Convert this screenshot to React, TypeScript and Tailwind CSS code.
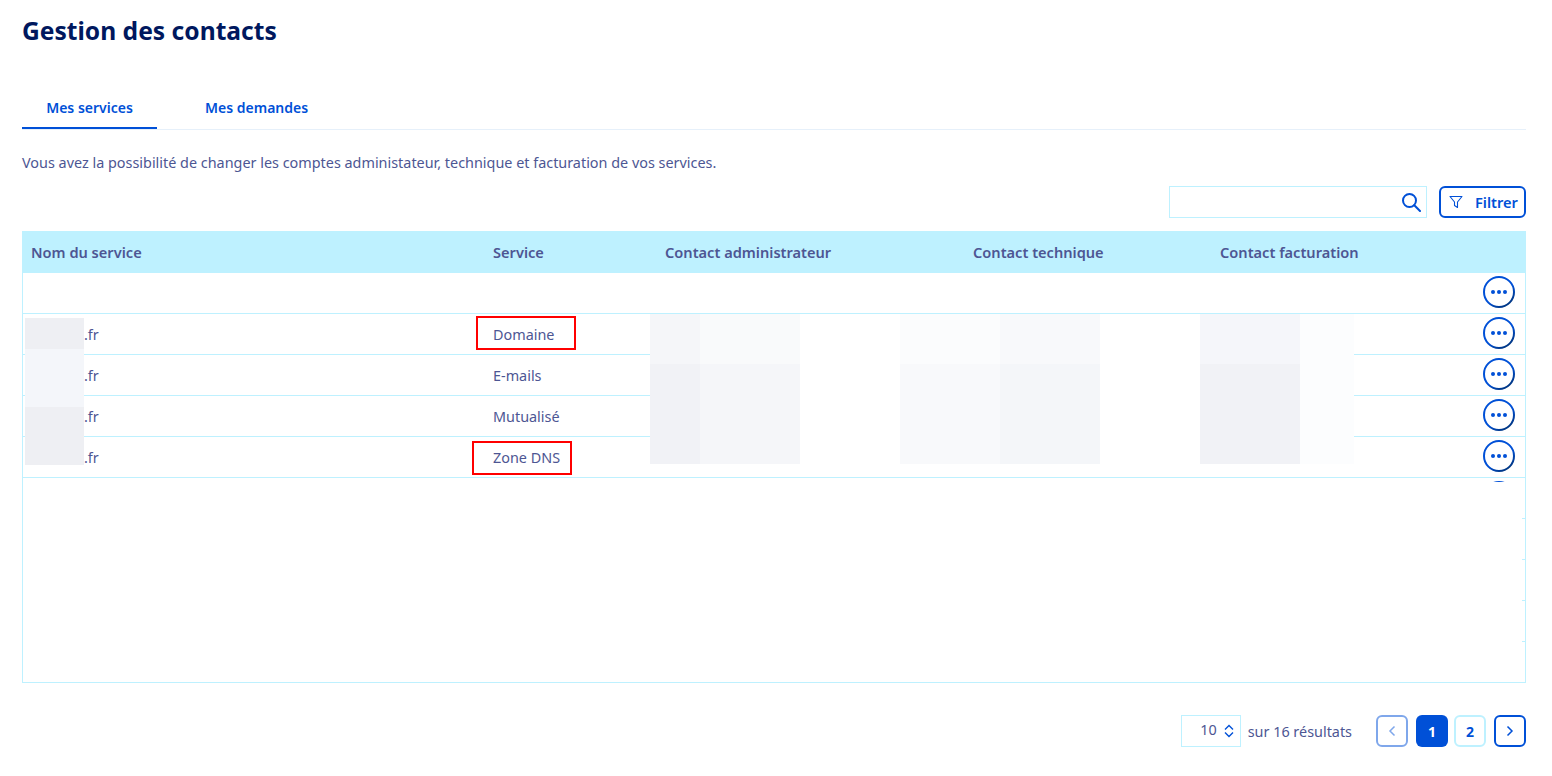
import React from "react";

const font = { fontFamily: '"Noto Sans", sans-serif' };

function MoreButton() {
  return (
    <svg width="32" height="32" viewBox="0 0 32 32" className="block">
      <defs>
        <linearGradient id="ring" x1="0.2" y1="0.1" x2="0.8" y2="0.95">
          <stop offset="0" stopColor="#0050d7" />
          <stop offset="0.55" stopColor="#0050d7" />
          <stop offset="1" stopColor="#00357f" />
        </linearGradient>
      </defs>
      <circle cx="16" cy="16" r="15" fill="#fff" stroke="url(#ring)" strokeWidth="2" />
      <circle cx="10" cy="16" r="2" fill="#0050d7" />
      <circle cx="16" cy="16" r="2" fill="#0050d7" />
      <circle cx="22" cy="16" r="2" fill="#0050d7" />
    </svg>
  );
}

const rows = [".fr", ".fr", ".fr", ".fr"];
const services = ["Domaine", "E-mails", "Mutualisé", "Zone DNS"];

function Row({ name, service }: { name: string; service: string }) {
  return (
    <div className="grid h-[41px] grid-cols-[462px_172px_308px_247px_1fr] items-center border-b border-[#bef1ff]">
      <div className="mt-[2px] pl-[61px]">{name}</div>
      <div className="mt-[2px] pl-[8px]">{service}</div>
      <div />
      <div />
      <div className="mb-[2px] flex justify-end pr-[10px]">
        <MoreButton />
      </div>
    </div>
  );
}

function Blur({ cls }: { cls: string }) {
  return <div className={cls} />;
}

export default function App() {
  return (
    <div style={font} className="relative h-[776px] w-[1552px] overflow-hidden bg-white pr-[26px] pl-[22px] text-[14.4px] text-[#4d5693]">
      <h1 className="pt-[14px] text-[24.6px] leading-[34px] font-bold text-[#00185e]">Gestion des contacts</h1>

      <div className="mt-[42px] flex h-[40px] border-b border-[#e6f0fa] text-[14px] font-semibold text-[#0050d7]">
        <div className="h-[39px] w-[135px] border-b-2 border-[#0050d7] pt-[8px] text-center leading-[20px]">Mes services</div>
        <div className="ml-[24px] h-[39px] px-[24px] pt-[8px] leading-[20px]">Mes demandes</div>
      </div>

      <p className="mt-[22px] h-[22px] leading-[22px]">Vous avez la possibilité de changer les comptes administateur, technique et facturation de vos services.</p>

      <div className="mt-[12px] flex justify-end gap-[12px]">
        <div className="flex h-[32px] w-[258px] items-center justify-end border border-[#bef1ff] pr-[5px]">
          <svg width="20" height="20" viewBox="0 0 20 20" fill="none" stroke="#0050d7" strokeWidth="2">
            <circle cx="8.5" cy="8.5" r="6.5" />
            <path d="M13.3 13.3 19 19" strokeLinecap="round" />
          </svg>
        </div>
        <div className="flex h-[32px] w-[87px] items-center rounded-md border-2 border-[#0050d7] pl-[8px] font-semibold text-[#0050d7]">
          <svg width="14" height="14" viewBox="0 0 14 14" fill="none" stroke="#0050d7" strokeWidth="1.1" strokeLinejoin="round">
            <path d="M1 1.5h12L8.5 7v5.5l-3-2V7z" />
          </svg>
          <span className="ml-[12px] text-[14.6px] leading-none">Filtrer</span>
        </div>
      </div>

      <div className="relative mt-[13px] h-[452px] border-x border-b border-[#bef1ff]">
        <div className="-mx-px grid h-[42px] grid-cols-[462px_172px_308px_247px_1fr] items-center bg-[#bef1ff] pt-[2px] text-[14.6px] font-semibold">
          <div className="pl-[9px]">Nom du service</div>
          <div className="pl-[9px]">Service</div>
          <div className="pl-[9px]">Contact administrateur</div>
          <div className="pl-[9px]">Contact technique</div>
          <div className="pl-[9px]">Contact facturation</div>
        </div>
        <Row name="" service="" />
        {rows.map((n, i) => (
          <Row key={i} name={n} service={services[i]} />
        ))}

        {/* top of the next, cut-off action button */}
        <div className="absolute top-[250px] right-[10px] h-px w-[32px] overflow-hidden">
          <MoreButton />
        </div>
        <div className="absolute top-[287px] right-0 h-px w-[3px] bg-[#bef1ff]" />
        <div className="absolute top-[328px] right-0 h-px w-[3px] bg-[#bef1ff]" />
        <div className="absolute top-[369px] right-0 h-px w-[3px] bg-[#bef1ff]" />
        <div className="absolute top-[410px] right-0 h-px w-[3px] bg-[#bef1ff]" />

        {/* redaction patches over the name column */}
        <div className="absolute top-[87px] left-[2px] grid w-[59px] grid-rows-[31px_58px_58px]">
          <Blur cls="bg-[#eeeff3]" />
          <Blur cls="bg-[#f4f6fa]" />
          <Blur cls="bg-[#eeeff3]" />
        </div>

        {/* redaction patches over the contact columns */}
        <div className="absolute top-[83px] left-[627px] grid h-[150px] w-[704px] grid-cols-[50px_100px_100px_100px_100px_100px_100px_54px] grid-rows-[50px_100px] bg-white">
          <Blur cls="bg-[#f5f6f9]" />
          <Blur cls="bg-[#f9fafb]" />
          <Blur cls="bg-white" />
          <Blur cls="bg-[#fbfcfd]" />
          <Blur cls="bg-[#f8f9fb]" />
          <Blur cls="bg-white" />
          <Blur cls="bg-[#f5f6fa]" />
          <Blur cls="bg-[#fcfdfe]" />
          <Blur cls="bg-[#f1f2f6]" />
          <Blur cls="bg-[#f5f6f9]" />
          <Blur cls="bg-white" />
          <Blur cls="bg-[#f8f9fb]" />
          <Blur cls="bg-[#f4f6f9]" />
          <Blur cls="bg-white" />
          <Blur cls="bg-[#f1f2f6]" />
          <Blur cls="bg-[#fcfdfe]" />
        </div>

        {/* red annotation boxes */}
        <div className="absolute top-[85px] left-[453px] h-[34px] w-[100px] border-2 border-[#ff0000]" />
        <div className="absolute top-[210px] left-[449px] h-[34px] w-[100px] border-2 border-[#ff0000]" />
      </div>

      <div className="mt-[32px] flex h-[32px] items-center justify-end">
        <div className="flex h-[32px] w-[60px] items-center justify-end gap-[7px] border border-[#bef1ff] pr-[6px]">
          <span className="mb-[1px] leading-none">10</span>
          <svg width="10" height="14" viewBox="0 0 10 14" fill="none" stroke="#0050d7" strokeWidth="1.4">
            <path d="M1 5.5 5 1.5l4 4M1 8.5l4 4 4-4" />
          </svg>
        </div>
        <span className="mt-[2px] ml-[7px]">sur 16 résultats</span>
        <div className="ml-[24px] flex h-[32px] w-[32px] items-center justify-center rounded-md border-2 border-[#7fa7eb]">
          <svg width="8" height="12" viewBox="0 0 8 12" fill="none" stroke="#7fa7eb" strokeWidth="1.5"><path d="M6.5 1.5 2 6l4.5 4.5" /></svg>
        </div>
        <div className="ml-[8px] flex h-[32px] w-[32px] items-center justify-center rounded-md bg-[#0050d7] text-[14px] font-bold text-white">1</div>
        <div className="ml-[6px] flex h-[32px] w-[32px] items-center justify-center rounded-md border-2 border-[#bef1ff] text-[14px] font-bold text-[#0050d7]">2</div>
        <div className="ml-[8px] flex h-[32px] w-[32px] items-center justify-center rounded-md border-2 border-[#0050d7]">
          <svg width="8" height="12" viewBox="0 0 8 12" fill="none" stroke="#0050d7" strokeWidth="1.5"><path d="M1.5 1.5 6 6l-4.5 4.5" /></svg>
        </div>
      </div>
    </div>
  );
}
